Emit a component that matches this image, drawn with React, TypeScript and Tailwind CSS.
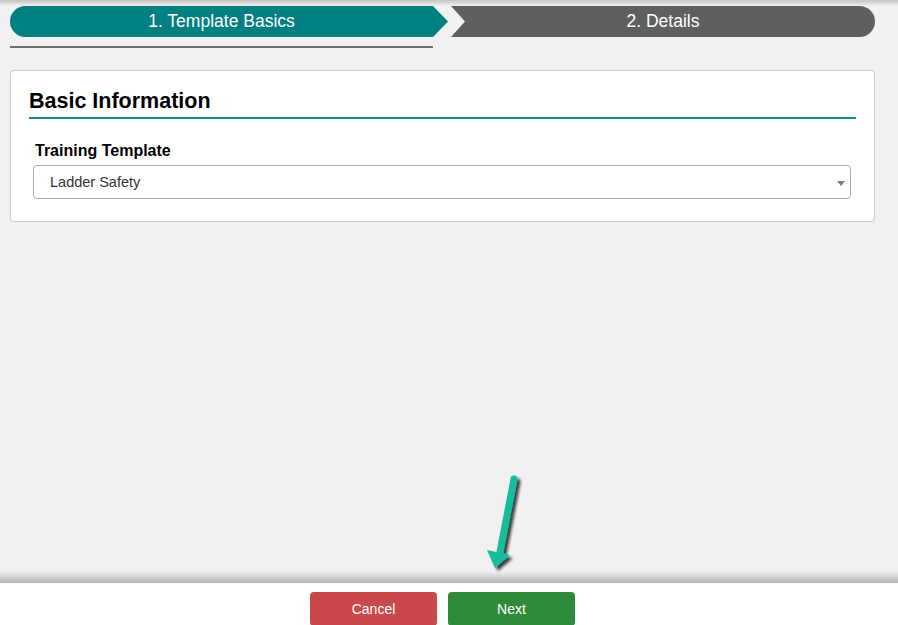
import React from "react";

function StepBar() {
  return (
    <div className="flex h-[31px] w-full">
      <div className="flex h-full w-[438px] shrink-0 items-center rounded-l-full bg-[#008080] pr-[15px] [clip-path:polygon(0_0,423px_0,438px_50%,423px_100%,0_100%)]">
        <span className="w-full text-center text-[17.5px] leading-none text-white">1. Template Basics</span>
      </div>
      <div className="ml-[3px] flex h-full flex-1 items-center rounded-r-full bg-[#5f5f5f] [clip-path:polygon(0_0,100%_0,100%_100%,0_100%,14px_50%)]">
        <span className="w-full text-center text-[17.5px] leading-none text-white">2. Details</span>
      </div>
    </div>
  );
}

function PointerArrow() {
  return (
    <svg
      className="pointer-events-none absolute left-[480px] top-[470px]"
      width="50"
      height="112"
      viewBox="0 0 50 112"
    >
      <defs>
        <filter id="arrowShade" x="-50%" y="-20%" width="200%" height="140%">
          <feDropShadow dx="3" dy="3" stdDeviation="1.6" floodColor="#000" floodOpacity="0.75" />
        </filter>
      </defs>
      <g filter="url(#arrowShade)">
        <line x1="34" y1="9" x2="20" y2="82" stroke="#17bd9d" strokeWidth="7" strokeLinecap="round" />
        <polygon points="7,80 30,85 15,98" fill="#17bd9d" />
      </g>
    </svg>
  );
}

export default function App() {
  return (
    <div className="relative flex h-[625px] w-full flex-col overflow-hidden bg-[#f1f1f1] font-['Liberation_Sans',Arial,sans-serif]">
      <div className="h-[6px] bg-linear-to-b from-[#c4c4c4] to-[#f1f1f1]" />

      <div className="pl-[10px] pr-[23px]">
        <StepBar />
        <div className="mt-[9px] h-[2px] w-[423px] bg-[#6e6e6e]" />

        <div className="mt-[22px] rounded-[4px] border border-[#cccccc] bg-white px-[18px] pb-[22px] pt-[17px]">
          <h2 className="text-[21.5px] font-bold leading-[26px] text-black">Basic Information</h2>
          <div className="mt-[3px] h-[2px] bg-[#0e8c8c]" />

          <div className="ml-[4px] mr-[5px] mt-[22px]">
            <label className="block pl-[2px] text-[16px] font-bold leading-[20px] text-black">Training Template</label>
            <div className="relative mt-[4px] flex h-[34px] items-center rounded-[4px] border border-[#aaaaaa] bg-white pl-[16px] pt-[1px]">
              <span className="text-[14.5px] text-[#333333]">Ladder Safety</span>
              <span className="absolute right-[5px] top-[15px] h-0 w-0 border-l-[4px] border-r-[4px] border-t-[5px] border-l-transparent border-r-transparent border-t-[#808080]" />
            </div>
          </div>
        </div>
      </div>

      <div className="flex-1" />

      <div className="h-[12px] bg-linear-to-b from-[#f1f1f1] to-[#b5b5b5]" />
      <div className="flex h-[42px] justify-center gap-[11px] bg-white pr-[13px] pt-[9px]">
        <button className="flex h-[34px] w-[127px] items-center justify-center rounded-[4px] bg-[#c9494a] text-[14px] text-white">
          Cancel
        </button>
        <button className="flex h-[34px] w-[127px] items-center justify-center rounded-[4px] bg-[#2e8b3a] text-[14px] text-white">
          Next
        </button>
      </div>

      <PointerArrow />
    </div>
  );
}
